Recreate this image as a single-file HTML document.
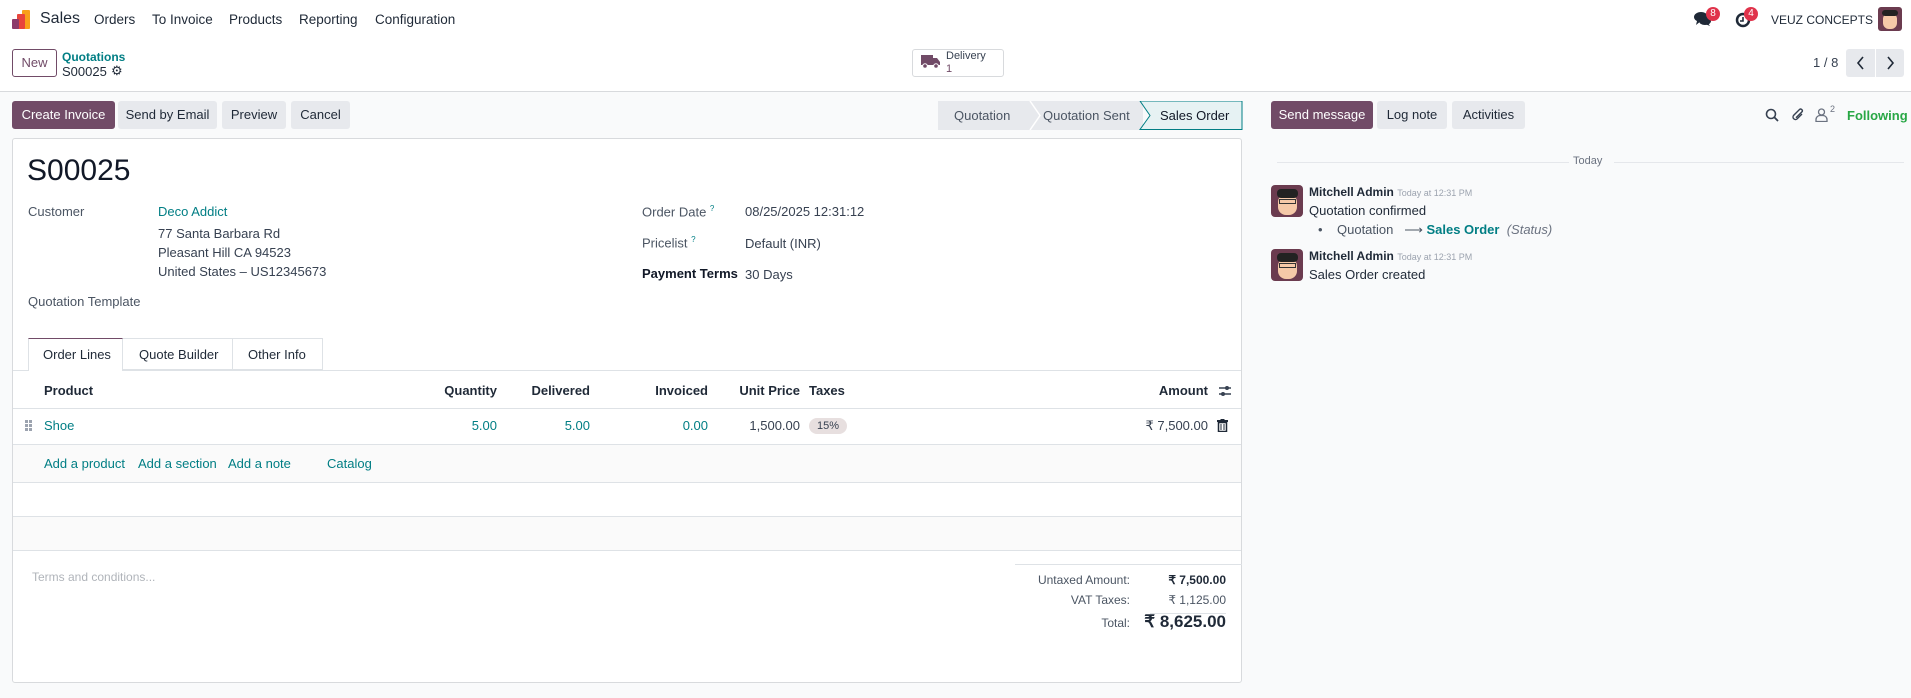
<!DOCTYPE html>
<html><head><meta charset="utf-8">
<style>
*{box-sizing:border-box;margin:0;padding:0}
body{width:1911px;height:698px;overflow:hidden;background:#f9fafb;font-family:"Liberation Sans",sans-serif;font-size:13px;color:#374151;position:relative}
.a{position:absolute;white-space:nowrap}
.top{position:absolute;left:0;top:0;width:1911px;height:92px;background:#fff;border-bottom:1px solid #d8dadd}
.btn{position:absolute;height:28px;line-height:28px;text-align:center;border-radius:3px;font-size:13px}
.sec{background:#e7e9ed;color:#1f2937}
.pri{background:#714b67;color:#fff}
.link{color:#017e84}
.sheet{position:absolute;left:12px;top:138px;width:1230px;height:545px;background:#fff;border:1px solid #d8dadd;border-radius:3px}
.hl{position:absolute;height:1px;background:#dee2e6}
.dot{position:absolute;width:3px;height:3px;background:#9ca3af}
</style></head><body>
<div class="top"></div>
<svg class="a" style="left:11px;top:10px" width="20" height="20" viewBox="0 0 20 20">
<rect x="11" y="0" width="8" height="19" rx="1" fill="#f9a01b"/>
<rect x="6" y="4" width="8" height="15" rx="1" fill="#e8453c"/>
<rect x="1" y="9" width="7" height="10" rx="1" fill="#8c3a6a"/>
</svg>
<div class="a" style="left:40px;top:10px;font-size:16px;color:#1f2937">Sales</div>
<div class="a" style="left:94px;top:12px;font-size:13.5px;color:#1f2937">Orders</div>
<div class="a" style="left:152px;top:12px;font-size:13.5px;color:#1f2937">To Invoice</div>
<div class="a" style="left:229px;top:12px;font-size:13.5px;color:#1f2937">Products</div>
<div class="a" style="left:299px;top:12px;font-size:13.5px;color:#1f2937">Reporting</div>
<div class="a" style="left:375px;top:12px;font-size:13.5px;color:#1f2937">Configuration</div>
<svg class="a" style="left:1694px;top:11px" width="18" height="16" viewBox="0 0 18 16"><ellipse cx="7" cy="6" rx="7" ry="5" fill="#1f2937"/><ellipse cx="11" cy="10" rx="6" ry="4" fill="#1f2937"/><path d="M3 10 L2 14 L7 10Z M14 12 L16 15 L11 13Z" fill="#1f2937"/></svg>
<div class="a" style="left:1706px;top:7px;width:14px;height:14px;border-radius:7px;background:#e0334b;color:#fff;font-size:10px;text-align:center;line-height:14px">8</div>
<svg class="a" style="left:1735px;top:12px" width="16" height="16" viewBox="0 0 16 16"><circle cx="8" cy="8" r="6" fill="none" stroke="#1f2937" stroke-width="2.5"/><path d="M8 5v4h-3" stroke="#1f2937" stroke-width="1.6" fill="none"/></svg>
<div class="a" style="left:1744px;top:7px;width:14px;height:14px;border-radius:7px;background:#e0334b;color:#fff;font-size:10px;text-align:center;line-height:14px">4</div>
<div class="a" style="left:1771px;top:13px;font-size:12px;color:#1f2937">VEUZ CONCEPTS</div>
<div class="a" style="left:1878px;top:7px;width:24px;height:24px;border-radius:3px;background:#6b3b4f;overflow:hidden"><div style="position:absolute;left:5px;top:6px;width:14px;height:16px;border-radius:6px;background:#f5c9a8"></div><div style="position:absolute;left:4px;top:3px;width:16px;height:6px;border-radius:3px;background:#222"></div></div>
<div class="btn" style="left:12px;top:49px;width:45px;border:1px solid #714b67;background:#fff;color:#714b67;line-height:26px">New</div>
<div class="a link" style="left:62px;top:50px;font-size:12px;font-weight:bold">Quotations</div>
<div class="a" style="left:62px;top:64px;font-size:13px;color:#1f2937">S00025</div>
<div class="a" style="left:111px;top:63px;font-size:13px;color:#1f2937">⚙</div>
<div class="btn" style="left:912px;top:49px;width:92px;border:1px solid #d8dadd;background:#fff;text-align:left"></div>
<svg class="a" style="left:921px;top:55px" width="20" height="14" viewBox="0 0 20 14"><rect x="0" y="0" width="12" height="10" fill="#714b67"/><path d="M12 3h4l3 4v3h-7z" fill="#714b67"/><circle cx="4" cy="11" r="2.3" fill="#714b67" stroke="#fff"/><circle cx="15" cy="11" r="2.3" fill="#714b67" stroke="#fff"/></svg>
<div class="a" style="left:946px;top:50px;font-size:11px;color:#374151">Delivery</div>
<div class="a" style="left:946px;top:63px;font-size:11px;color:#714b67">1</div>
<div class="a" style="left:1813px;top:55px;font-size:13px">1 / 8</div>
<div class="btn sec" style="left:1846px;top:49px;width:29px;border-radius:3px 0 0 3px">
<svg width="10" height="14" style="margin-top:7px" viewBox="0 0 10 14"><path d="M7 1L2 7l5 6" stroke="#1f2937" stroke-width="1.6" fill="none"/></svg></div>
<div class="btn sec" style="left:1876px;top:49px;width:28px;border-radius:0 3px 3px 0">
<svg width="10" height="14" style="margin-top:7px" viewBox="0 0 10 14"><path d="M3 1l5 6-5 6" stroke="#1f2937" stroke-width="1.6" fill="none"/></svg></div>
<div class="btn pri" style="left:12px;top:101px;width:103px">Create Invoice</div>
<div class="btn sec" style="left:118px;top:101px;width:99px">Send by Email</div>
<div class="btn sec" style="left:222px;top:101px;width:64px">Preview</div>
<div class="btn sec" style="left:291px;top:101px;width:59px">Cancel</div>
<svg class="a" style="left:938px;top:101px" width="305" height="29" viewBox="0 0 305 29">
<rect x="0" y="0" width="205" height="29" fill="#e7e9ed"/>
<path d="M92 0l10 14.5L92 29" stroke="#fff" stroke-width="1.5" fill="none"/>
<path d="M202 0h102v28.5H202l10-14z" fill="#e6f2f3" stroke="#017e84" stroke-width="1"/>
</svg>
<div class="a" style="left:954px;top:108px;font-size:13px;color:#4b5563">Quotation</div>
<div class="a" style="left:1043px;top:108px;font-size:13px;color:#4b5563">Quotation Sent</div>
<div class="a" style="left:1160px;top:108px;font-size:13px;color:#111827">Sales Order</div>
<div class="btn pri" style="left:1271px;top:101px;width:102px">Send message</div>
<div class="btn sec" style="left:1377px;top:101px;width:70px">Log note</div>
<div class="btn sec" style="left:1452px;top:101px;width:73px">Activities</div>
<svg class="a" style="left:1765px;top:108px" width="14" height="14" viewBox="0 0 14 14"><circle cx="6" cy="6" r="4.5" stroke="#374151" stroke-width="1.6" fill="none"/><path d="M9.3 9.3L13 13" stroke="#374151" stroke-width="1.8"/></svg>
<svg class="a" style="left:1791px;top:107px" width="14" height="16" viewBox="0 0 14 16"><path d="M11 7L6 12a2.5 2.5 0 01-3.5-3.5L8.5 2.5a1.7 1.7 0 012.4 2.4L5 10.8" stroke="#374151" stroke-width="1.4" fill="none"/></svg>
<svg class="a" style="left:1815px;top:108px" width="13" height="14" viewBox="0 0 13 14"><circle cx="6.5" cy="4" r="3" stroke="#6b7280" stroke-width="1.3" fill="none"/><path d="M1 13.5v-2a4 4 0 014-4h3a4 4 0 014 4v2z" stroke="#6b7280" stroke-width="1.3" fill="none"/></svg>
<div class="a" style="left:1830px;top:104px;font-size:9px;color:#6b7280">2</div>
<div class="a" style="left:1847px;top:108px;font-size:13px;color:#28a745;font-weight:bold">Following</div>
<div class="hl" style="left:1277px;top:162px;width:292px;background:#e5e7eb"></div>
<div class="hl" style="left:1614px;top:162px;width:290px;background:#e5e7eb"></div>
<div class="a" style="left:1573px;top:155px;font-size:11px;color:#6b7280">Today</div>
<div class="a" style="left:1271px;top:185px;width:32px;height:32px;border-radius:4px;background:#6b3b4f;overflow:hidden"><div style="position:absolute;left:7px;top:9px;width:19px;height:21px;border-radius:8px;background:#f5c9a8"></div><div style="position:absolute;left:6px;top:4px;width:21px;height:9px;border-radius:4px;background:#222"></div><div style="position:absolute;left:8px;top:14px;width:17px;height:5px;border:1.5px solid #333"></div></div>
<div class="a" style="left:1309px;top:185px;font-size:12px;font-weight:bold;color:#1f2937">Mitchell Admin <span style="font-weight:normal;font-size:9px;color:#9ca3af">Today at 12:31 PM</span></div>
<div class="a" style="left:1309px;top:203px;font-size:13px;color:#1f2937">Quotation confirmed</div>
<div class="a" style="left:1318px;top:222px;font-size:13px;color:#4b5563">•&nbsp;&nbsp;&nbsp;&nbsp;Quotation&nbsp;&nbsp;&nbsp;⟶ <span style="color:#017e84;font-weight:bold">Sales Order</span>&nbsp;&nbsp;<i style="color:#6b7280">(Status)</i></div>
<div class="a" style="left:1271px;top:249px;width:32px;height:32px;border-radius:4px;background:#6b3b4f;overflow:hidden"><div style="position:absolute;left:7px;top:9px;width:19px;height:21px;border-radius:8px;background:#f5c9a8"></div><div style="position:absolute;left:6px;top:4px;width:21px;height:9px;border-radius:4px;background:#222"></div><div style="position:absolute;left:8px;top:14px;width:17px;height:5px;border:1.5px solid #333"></div></div>
<div class="a" style="left:1309px;top:249px;font-size:12px;font-weight:bold;color:#1f2937">Mitchell Admin <span style="font-weight:normal;font-size:9px;color:#9ca3af">Today at 12:31 PM</span></div>
<div class="a" style="left:1309px;top:267px;font-size:13px;color:#1f2937">Sales Order created</div>
<div class="sheet"></div>
<div class="a" style="left:27px;top:154px;font-size:30px;color:#111827">S00025</div>
<div class="a" style="left:28px;top:204px;font-size:13px;color:#4b5563">Customer</div>
<div class="a link" style="left:158px;top:204px;font-size:13px">Deco Addict</div>
<div class="a" style="left:158px;top:226px;font-size:13px">77 Santa Barbara Rd</div>
<div class="a" style="left:158px;top:245px;font-size:13px">Pleasant Hill CA 94523</div>
<div class="a" style="left:158px;top:264px;font-size:13px">United States – US12345673</div>
<div class="a" style="left:28px;top:294px;font-size:13px;color:#4b5563">Quotation Template</div>
<div class="a" style="left:642px;top:204px;font-size:13px;color:#4b5563">Order Date <sup style="color:#017e84;font-size:8px">?</sup></div>
<div class="a" style="left:745px;top:204px;font-size:13px">08/25/2025 12:31:12</div>
<div class="a" style="left:642px;top:235px;font-size:13px;color:#4b5563">Pricelist <sup style="color:#017e84;font-size:8px">?</sup></div>
<div class="a" style="left:745px;top:236px;font-size:13px">Default (INR)</div>
<div class="a" style="left:642px;top:266px;font-size:13px;color:#111827;font-weight:bold">Payment Terms</div>
<div class="a" style="left:745px;top:267px;font-size:13px">30 Days</div>
<div class="hl" style="left:13px;top:370px;width:1228px"></div>
<div class="a" style="left:28px;top:338px;width:95px;height:33px;background:#fff;border:1px solid #dee2e6;border-top:1px solid #714b67;border-bottom:none"></div>
<div class="a" style="left:123px;top:338px;width:110px;height:32px;border:1px solid #dee2e6;border-left:none"></div>
<div class="a" style="left:233px;top:338px;width:90px;height:32px;border:1px solid #dee2e6;border-left:none"></div>
<div class="a" style="left:43px;top:347px;font-size:13px;color:#1f2937">Order Lines</div>
<div class="a" style="left:139px;top:347px;font-size:13px;color:#1f2937">Quote Builder</div>
<div class="a" style="left:248px;top:347px;font-size:13px;color:#1f2937">Other Info</div>
<div class="a" style="left:44px;top:383px;font-size:13px;font-weight:bold;color:#1f2937">Product</div>
<div class="a" style="left:397px;width:100px;text-align:right;top:383px;font-size:13px;font-weight:bold;color:#1f2937">Quantity</div>
<div class="a" style="left:490px;width:100px;text-align:right;top:383px;font-size:13px;font-weight:bold;color:#1f2937">Delivered</div>
<div class="a" style="left:608px;width:100px;text-align:right;top:383px;font-size:13px;font-weight:bold;color:#1f2937">Invoiced</div>
<div class="a" style="left:700px;width:100px;text-align:right;top:383px;font-size:13px;font-weight:bold;color:#1f2937">Unit Price</div>
<div class="a" style="left:809px;top:383px;font-size:13px;font-weight:bold;color:#1f2937">Taxes</div>
<div class="a" style="left:1108px;width:100px;text-align:right;top:383px;font-size:13px;font-weight:bold;color:#1f2937">Amount</div>
<svg class="a" style="left:1218px;top:384px" width="14" height="14" viewBox="0 0 14 14"><path d="M1 4h12M1 10h12" stroke="#374151" stroke-width="1.4"/><circle cx="9" cy="4" r="2" fill="#374151"/><circle cx="5" cy="10" r="2" fill="#374151"/></svg>
<div class="hl" style="left:13px;top:408px;width:1228px"></div>
<div class="dot" style="left:25px;top:420px"></div><div class="dot" style="left:29px;top:420px"></div>
<div class="dot" style="left:25px;top:424px"></div><div class="dot" style="left:29px;top:424px"></div>
<div class="dot" style="left:25px;top:428px"></div><div class="dot" style="left:29px;top:428px"></div>
<div class="a link" style="left:44px;top:418px;font-size:13px">Shoe</div>
<div class="a link" style="left:397px;width:100px;text-align:right;top:418px;font-size:13px">5.00</div>
<div class="a link" style="left:490px;width:100px;text-align:right;top:418px;font-size:13px">5.00</div>
<div class="a link" style="left:608px;width:100px;text-align:right;top:418px;font-size:13px">0.00</div>
<div class="a" style="left:700px;width:100px;text-align:right;top:418px;font-size:13px">1,500.00</div>
<div class="a" style="left:809px;top:418px;width:38px;height:16px;border-radius:8px;background:#e7dfdf;font-size:11px;text-align:center;line-height:16px;color:#374151">15%</div>
<div class="a" style="left:1108px;width:100px;text-align:right;top:418px;font-size:13px">₹ 7,500.00</div>
<svg class="a" style="left:1217px;top:419px" width="11" height="13" viewBox="0 0 11 13"><rect x="0" y="1" width="11" height="2" fill="#1f2937"/><rect x="3.5" y="0" width="4" height="2" fill="#1f2937"/><rect x="1.5" y="3.5" width="8" height="9" fill="none" stroke="#1f2937" stroke-width="1.5"/><path d="M4 5v6M7 5v6" stroke="#1f2937"/></svg>
<div class="hl" style="left:13px;top:444px;width:1228px"></div>
<div class="a" style="left:13px;top:445px;width:1228px;height:37px;background:#fafafa"></div>
<div class="a link" style="left:44px;top:456px;font-size:13px">Add a product</div>
<div class="a link" style="left:138px;top:456px;font-size:13px">Add a section</div>
<div class="a link" style="left:228px;top:456px;font-size:13px">Add a note</div>
<div class="a link" style="left:327px;top:456px;font-size:13px">Catalog</div>
<div class="hl" style="left:13px;top:482px;width:1228px"></div>
<div class="hl" style="left:13px;top:516px;width:1228px"></div>
<div class="a" style="left:13px;top:517px;width:1228px;height:33px;background:#fafafa"></div>
<div class="hl" style="left:13px;top:550px;width:1228px"></div>
<div class="a" style="left:32px;top:570px;font-size:12px;color:#b0b4ba">Terms and conditions...</div>
<div class="hl" style="left:1015px;top:564px;width:227px"></div>
<div class="a" style="left:980px;width:150px;text-align:right;top:573px;font-size:12px;color:#4b5563">Untaxed Amount:</div>
<div class="a" style="left:1076px;width:150px;text-align:right;top:573px;font-size:12px;font-weight:bold;color:#1f2937">₹ 7,500.00</div>
<div class="a" style="left:980px;width:150px;text-align:right;top:593px;font-size:12px;color:#4b5563">VAT Taxes:</div>
<div class="a" style="left:1076px;width:150px;text-align:right;top:593px;font-size:12px;color:#4b5563">₹ 1,125.00</div>
<div class="hl" style="left:1150px;top:613px;width:76px"></div>
<div class="a" style="left:980px;width:150px;text-align:right;top:616px;font-size:12px;color:#4b5563">Total:</div>
<div class="a" style="left:1046px;width:180px;text-align:right;top:612px;font-size:17px;font-weight:bold;color:#1f2937">₹ 8,625.00</div>
</body></html>
